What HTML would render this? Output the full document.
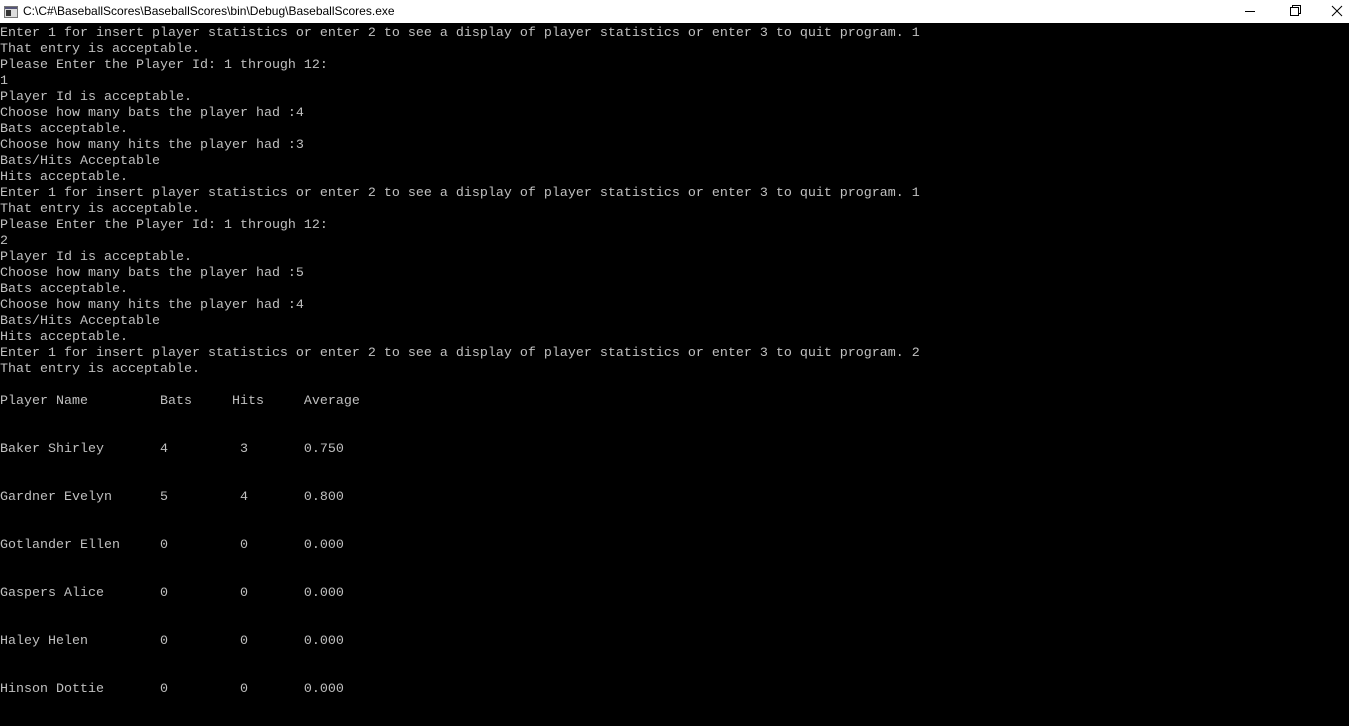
<!DOCTYPE html>
<html><head><meta charset="utf-8"><style>
html,body{margin:0;padding:0;width:1350px;height:726px;overflow:hidden;background:#000}
#title{position:absolute;left:0;top:0;width:1350px;height:23px;background:#fff;font-family:"Liberation Sans",sans-serif;font-size:12px;color:#000}
#title .t{position:absolute;left:23px;top:4px}
#icon{position:absolute;left:4px;top:6px;width:12px;height:10px;border:1px solid #777;background:#ddd}
#icon:before{content:"";position:absolute;left:0;top:0;width:12px;height:2px;background:#557}
#icon:after{content:"";position:absolute;left:1px;top:3px;width:5px;height:6px;background:#333}
.btn{position:absolute;top:0;height:23px;width:46px}
#edge{position:absolute;left:1349px;top:0;width:1px;height:726px;background:#fff}
pre{position:absolute;left:0;top:26px;margin:0;font-family:"Liberation Mono",monospace;font-size:13.33px;line-height:16px;color:#c0c0c0;white-space:pre}
</style></head><body>
<div id="title"><div id="icon"></div><span class="t">C:\C#\BaseballScores\BaseballScores\bin\Debug\BaseballScores.exe</span>
<svg class="btn" style="left:1227px" viewBox="0 0 46 23"><line x1="18" y1="11.5" x2="28" y2="11.5" stroke="#000"/></svg>
<svg class="btn" style="left:1273px" viewBox="0 0 46 23"><rect x="17.5" y="7.5" width="8" height="8" fill="none" stroke="#000"/><path d="M19.5 7.5V5.5H27.5V13.5H25.5" fill="none" stroke="#000"/></svg>
<svg class="btn" style="left:1319px" viewBox="0 0 46 23"><path d="M13 6L23 16M23 6L13 16" stroke="#000"/></svg>
</div>
<div id="edge"></div>
<pre>Enter 1 for insert player statistics or enter 2 to see a display of player statistics or enter 3 to quit program. 1
That entry is acceptable.
Please Enter the Player Id: 1 through 12:
1
Player Id is acceptable.
Choose how many bats the player had :4
Bats acceptable.
Choose how many hits the player had :3
Bats/Hits Acceptable
Hits acceptable.
Enter 1 for insert player statistics or enter 2 to see a display of player statistics or enter 3 to quit program. 1
That entry is acceptable.
Please Enter the Player Id: 1 through 12:
2
Player Id is acceptable.
Choose how many bats the player had :5
Bats acceptable.
Choose how many hits the player had :4
Bats/Hits Acceptable
Hits acceptable.
Enter 1 for insert player statistics or enter 2 to see a display of player statistics or enter 3 to quit program. 2
That entry is acceptable.

Player Name         Bats     Hits     Average


Baker Shirley       4         3       0.750


Gardner Evelyn      5         4       0.800


Gotlander Ellen     0         0       0.000


Gaspers Alice       0         0       0.000


Haley Helen         0         0       0.000


Hinson Dottie       0         0       0.000
</pre>
</body></html>
